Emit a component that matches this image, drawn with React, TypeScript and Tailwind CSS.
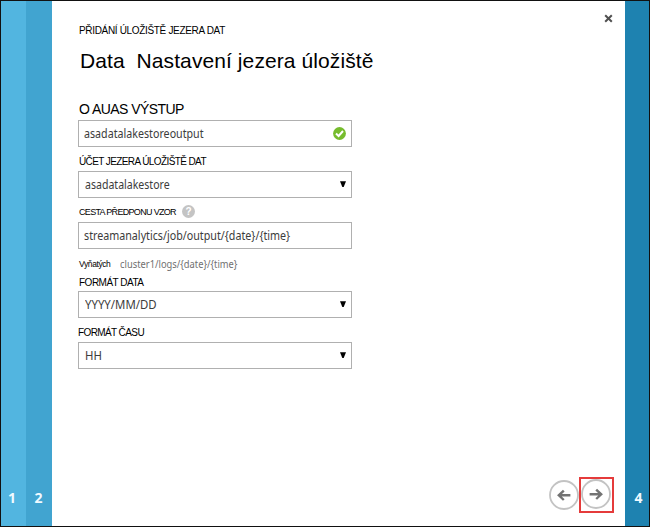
import type { ReactNode } from "react";

const label = "flex items-center whitespace-pre text-black";
const box =
  "flex h-[27px] w-[274px] shrink-0 items-center justify-between border border-[#b0b0b0] bg-white pl-[5px] pr-[5px] font-['Noto_Sans',sans-serif] text-[12px] text-[#3c3c3c]";

function Field({ children }: { children: ReactNode }) {
  return <div className={box}>{children}</div>;
}

function Caret() {
  return (
    <svg width="6" height="6" viewBox="0 0 6 6" className="-mt-[2px]">
      <path d="M0 0.3H6L3.7 6H2.3Z" fill="#000" />
    </svg>
  );
}

function Arrow({ flip = false }: { flip?: boolean }) {
  return (
    <svg width="30" height="30" viewBox="0 0 30 30" className={flip ? "mb-px shrink-0 -scale-x-100" : "shrink-0"}>
      <circle cx="15" cy="15" r="14" fill="#fff" stroke="#c3c3c3" strokeWidth="1.8" />
      <path d="M8.6 15.3H20M15.2 10.6L20.2 15.3L15.2 20" fill="none" stroke="#737373" strokeWidth="2.4" />
    </svg>
  );
}

function Strip({ n, className }: { n: string; className: string }) {
  return (
    <div className={`flex shrink-0 items-end justify-center pb-[18px] font-['Open_Sans',sans-serif] text-[14px] leading-[20px] font-bold text-[#f0faff] ${className}`}>
      {n}
    </div>
  );
}

export default function App() {
  return (
    <div className="flex h-[527px] w-[650px] overflow-hidden border border-[#111] bg-white font-['Liberation_Sans',Arial,sans-serif]">
      <Strip n="1" className="w-[25px] bg-[#52b5e0] pr-[3px]" />
      <Strip n="2" className="w-[26px] bg-[#41a4d0] pr-px" />
      <main className="flex min-w-0 flex-1 flex-col pl-[26px]">
        <header className="flex h-[38px] items-start justify-between pr-[12px]">
          <div className={`${label} mt-[21px] ml-px h-[16px] text-[10px] tracking-[-0.33px]`}>PŘIDÁNÍ ÚLOŽIŠTĚ JEZERA DAT</div>
          <svg width="9" height="9" viewBox="0 0 9 9" className="mt-[13px]">
            <path d="M1.2 1.2L7.8 7.8M7.8 1.2L1.2 7.8" stroke="#505050" strokeWidth="2" />
          </svg>
        </header>
        <h1 className={`${label} mt-[8px] ml-[2px] h-[28px] text-[21px] tracking-[0.09px]`}>Data  Nastavení jezera úložiště</h1>
        <div className={`${label} mt-[24px] ml-px h-[21px] text-[14px] tracking-[-0.55px]`}>O AUAS VÝSTUP</div>
        <Field>
          <span className="origin-left scale-x-[0.89]">asadatalakestoreoutput</span>
          <svg width="13" height="13" viewBox="0 0 13 13">
            <circle cx="6.5" cy="6.5" r="6.4" fill="#76bc2d" />
            <path d="M3 6.5L5.6 9L10 4" fill="none" stroke="#fff" strokeWidth="2" />
          </svg>
        </Field>
        <div className={`${label} mt-[5px] ml-px h-[19px] text-[10px] tracking-[-0.6px]`}>ÚČET JEZERA ÚLOŽIŠTĚ DAT</div>
        <Field>
          <span className="ml-px origin-left scale-x-[0.88]">asadatalakestore</span>
          <Caret />
        </Field>
        <div className={`${label} mt-[4px] ml-px h-[20px] gap-[6px] text-[9px]`}>
          <span className="mt-px tracking-[-0.68px]">CESTA PŘEDPONU VZOR</span>
          <span className="-mt-[2px] flex size-[13px] items-center justify-center rounded-full bg-[#c4c4c4] text-[10px] font-bold text-white">?</span>
        </div>
        <Field>
          <span className="origin-left scale-x-[0.892]">{"streamanalytics/job/output/{date}/{time}"}</span>
        </Field>
        <div className={`${label} mt-[7px] h-[17px]`}>
          <span className="ml-px w-[41px] text-[8.5px] tracking-[-0.4px]">Vyňatých</span>
          <span className="origin-left scale-x-[0.85] font-['Noto_Sans',sans-serif] text-[11px] text-[#707070]">{"cluster1/logs/{date}/{time}"}</span>
        </div>
        <div className={`${label} ml-px h-[18px] text-[10px] tracking-[-0.5px]`}>FORMÁT DATA</div>
        <Field>
          <span className="ml-px origin-left scale-x-[0.95]">YYYY/MM/DD</span>
          <Caret />
        </Field>
        <div className={`${label} mt-[4px] h-[20px] text-[10px] tracking-[-0.6px]`}>FORMÁT ČASU</div>
        <Field>
          <span className="ml-px origin-left scale-x-[0.95]">HH</span>
          <Caret />
        </Field>
        <footer className="mt-auto flex items-center justify-end pr-[11px] pb-[13px]">
          <Arrow flip />
          <div className="flex h-[36px] w-[35px] items-start border-2 border-[#e53b3b]">
            <Arrow />
          </div>
        </footer>
      </main>
      <Strip n="4" className="w-[24px] bg-[#1e82b0] pl-[3px]" />
    </div>
  );
}
